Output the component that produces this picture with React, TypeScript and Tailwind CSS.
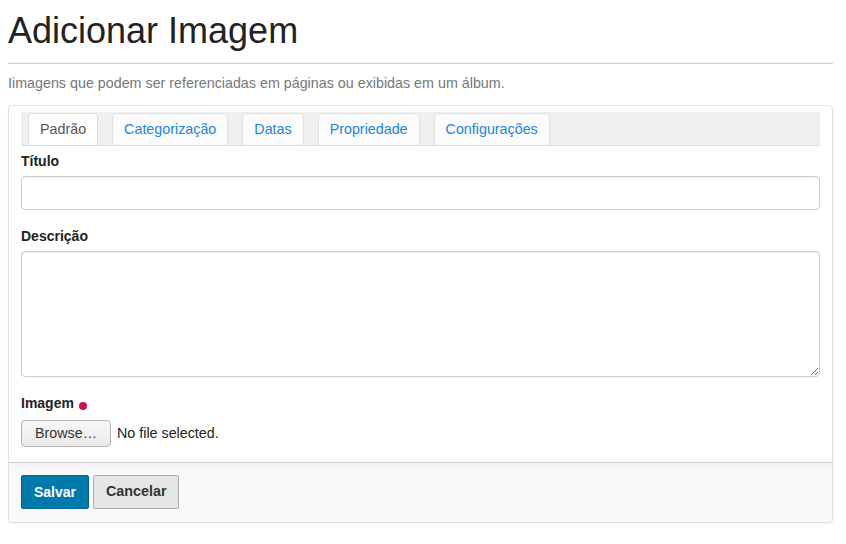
const tabs = ["Padrão", "Categorização", "Datas", "Propriedade", "Configurações"];

function Tab({ label, active }: { label: string; active: boolean }) {
  return (
    <div
      className={
        active
          ? "h-[32px] px-[11px] flex items-center rounded-t-[4px] border border-b-0 border-[#ddd] bg-white text-[#555]"
          : "h-[32px] px-[11px] flex items-center rounded-t-[4px] border border-b-0 border-[#e2e2e2] bg-[#fbfbfb] text-[#1a86e0]"
      }
    >
      {label}
    </div>
  );
}

export default function App() {
  return (
    <div className="min-h-[544px] bg-white pl-2 pr-[13px] pt-[11px] text-[14px] text-[#222] font-['Liberation_Sans',Arial,sans-serif]">
      <h1 className="text-[36px] leading-[40px] text-[#222] pb-[12px] border-b border-[#ccc]">Adicionar Imagem</h1>
      <p className="mt-[9px] leading-[20px] text-[14.3px] text-[#777]">Iimagens que podem ser referenciadas em páginas ou exibidas em um álbum.</p>

      <div className="mt-3 rounded-[4px] border border-[#e0e0e0] shadow-[0_1px_2px_rgba(0,0,0,0.05)] bg-white">
        <div className="px-3 pt-[6px]">
          <div className="flex gap-[14px] bg-[#f0f0f0] border-b border-[#ddd] pl-[7px] pt-px text-[14.3px]">
            {tabs.map((t, i) => (
              <Tab key={t} label={t} active={i === 0} />
            ))}
          </div>

          <label className="block mt-[5px] leading-[20px] font-bold text-[#222]">Título</label>
          <input
            type="text"
            className="mt-[5px] block w-full h-[34px] rounded-[4px] border border-[#ccc] px-3 shadow-[inset_0_1px_1px_rgba(0,0,0,0.075)] outline-none"
          />

          <label className="block mt-[16px] leading-[20px] font-bold text-[#222]">Descrição</label>
          <textarea className="mt-[5px] block w-full h-[126px] rounded-[4px] border border-[#ccc] px-3 py-[6px] shadow-[inset_0_1px_1px_rgba(0,0,0,0.075)] outline-none resize-y" />

          <div className="mt-[16px] flex items-center leading-[20px]">
            <span className="font-bold text-[#222]">Imagem</span>
            <span className="ml-[5px] mt-[5px] w-[8px] h-[8px] rounded-full bg-[#c8124a]" />
          </div>
          <div className="mt-[7px] flex items-center pb-[15px]">
            <button className="h-[27px] w-[90px] rounded-[4px] border border-[#b5b5b5] bg-gradient-to-b from-[#f8f8f8] to-[#e9e9e9] text-[#333] text-[14.3px]">
              Browse…
            </button>
            <span className="ml-[6px] text-[14.3px] text-[#222]">No file selected.</span>
          </div>
        </div>

        <div className="border-t border-[#ccc] bg-gradient-to-b from-[#f5f5f5] to-[#fafafa] to-[20%] rounded-b-[4px] px-3 pt-3 pb-[13px] flex gap-1">
          <button className="h-[34px] px-3 rounded-[2px] border border-[#00648f] bg-[#0079ad] text-white font-bold">Salvar</button>
          <button className="h-[34px] px-3 rounded-[2px] border border-[#adadad] bg-[#e6e6e6] text-[#333] text-[14.3px] font-bold">Cancelar</button>
        </div>
      </div>
    </div>
  );
}
